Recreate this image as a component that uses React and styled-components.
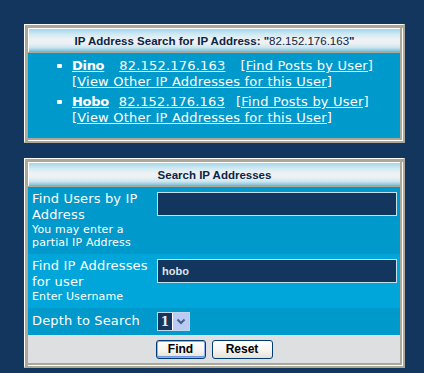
import styled, { createGlobalStyle } from "styled-components";

const Global = createGlobalStyle`
body {
  margin: 0;
  background: #12365e;
  font-family: "DejaVu Sans", Verdana, sans-serif;
}
`;

const Page = styled.div`
padding: 24px 0 20px 24px;
display: flex;
flex-direction: column;
gap: 15px;
`;

const Box = styled.div`
width: 381px;
box-sizing: border-box;
background: #aca899;
border-top: 1px solid #fff;
border-left: 1px solid #fff;
border-right: 2px solid #aca899;
border-bottom: 2px solid #aca899;
padding: 3px 0 0 3px;
`;

const Inner = styled.div`
border-right: 1px solid #fff;
border-bottom: 1px solid #fff;
padding: 0 2px 2px 0;
`;

const Header = styled.div`
height: 24px;
box-sizing: border-box;
border-top: 1px solid #fff;
border-left: 1px solid #fff;
margin-bottom: 1px;
background: linear-gradient(to bottom, #9fd6ea 0%, #cfe9f2 22%, #eef2f4 45%, #eef1f3 62%, #cde6ef 80%, #8fcbe0 93%, #6aaecb 100%);
display: flex;
align-items: center;
justify-content: center;
font: bold 11.5px "Liberation Sans", Arial, sans-serif;
color: #0c2444;
`;

const Plain = styled.span`
font-weight: normal;
`;

const ListBody = styled.ul`
margin: 0;
padding: 5px 0 12px 0;
list-style: none;
background: #0099cc;
color: #fff;
font-size: 13px;
line-height: 16px;
letter-spacing: 0.2px;
`;

const Item = styled.li`
position: relative;
padding-left: 44px;
margin-bottom: 4px;
&:last-child { margin-bottom: 0; }
&::before {
  content: "";
  position: absolute;
  left: 29px;
  top: 6px;
  width: 5px;
  height: 4px;
  border-radius: 1px;
  background: #fff;
}
`;

const Line = styled.div`
display: flex;
white-space: nowrap;
`;

const Link = styled.a`
color: #fff;
text-decoration: underline;
font-weight: ${p => (p.$bold ? "bold" : "normal")};
letter-spacing: ${p => (p.$bold ? "-0.3px" : "inherit")};
margin-left: ${p => p.$gap || 0}px;
`;

const Row = styled.div`
display: grid;
grid-template-columns: 125px 1fr;
align-items: ${p => (p.$center ? "center" : "start")};
min-height: ${p => p.$h}px;
background: ${p => (p.$alt ? "#00a6d9" : "#0099cc")};
color: #fff;
`;

const LabelCell = styled.div`
padding: 4px 4px 5px 4px;
font-size: 13px;
line-height: 16px;
letter-spacing: 0.15px;
`;

const Hint = styled.div`
font-size: 11px;
line-height: 13px;
`;

const InputCell = styled.div`
padding: ${p => (p.$flush ? "0 3px 0 4px" : "5px 3px 0 4px")};
`;

const Field = styled.div`
height: 24px;
box-sizing: border-box;
border: 1px solid #c6e0ec;
background: #12365e;
color: #dfe3ea;
font: bold 11px "Liberation Sans", Arial, sans-serif;
display: flex;
align-items: center;
padding-left: 4px;
`;

const Select = styled.div`
width: 33px;
height: 19px;
box-sizing: border-box;
border: 1px solid #c6d6ea;
display: flex;
background: #fff;
`;

const SelectValue = styled.div`
width: 14px;
background: #12365e;
color: #e8ecf2;
font: bold 12px "DejaVu Serif", "Liberation Serif", serif;
display: flex;
align-items: center;
justify-content: center;
`;

const SelectArrow = styled.div`
flex: 1;
margin-left: 1px;
background: #b9cbf4;
display: flex;
align-items: center;
justify-content: center;
`;

const Footer = styled.div`
height: 28px;
background: #dedfe1;
display: flex;
align-items: center;
justify-content: center;
gap: 6px;
`;

const Button = styled.button`
width: ${p => p.$w}px;
height: 19px;
padding: 0;
border: 1px solid #003c74;
border-radius: 3px;
background: linear-gradient(to bottom, #ffffff 0%, #f6f5f0 55%, #e4e1d6 100%);
box-shadow: ${p => (p.$focus ? "inset 0 0 0 1px #8fb0ec, inset 0 -1px 0 1px #6d93e2" : "none")};
font: bold 12px "Liberation Sans", Arial, sans-serif;
color: #000;
`;

const users = [
  { name: "Dino", ip: "82.152.176.163", g1: 15, g2: 15 },
  { name: "Hobo", ip: "82.152.176.163", g1: 10, g2: 11 },
];

export default function App() {
  return (
    <>
      <Global />
      <Page>
        <Box>
          <Inner>
            <Header>
              IP Address Search for IP Address: "<Plain>82.152.176.163</Plain>"
            </Header>
            <ListBody>
              {users.map(u => (
                <Item key={u.name}>
                  <Line>
                    <Link $bold>{u.name}</Link>
                    <Link $gap={u.g1}>{u.ip}</Link>
                    <Link $gap={u.g2}>[Find Posts by User]</Link>
                  </Line>
                  <Line>
                    <Link>[View Other IP Addresses for this User]</Link>
                  </Line>
                </Item>
              ))}
            </ListBody>
          </Inner>
        </Box>

        <Box>
          <Inner>
            <Header>Search IP Addresses</Header>
            <Row>
              <LabelCell>
                Find Users by IP Address
                <Hint>You may enter a partial IP Address</Hint>
              </LabelCell>
              <InputCell>
                <Field />
              </InputCell>
            </Row>
            <Row $alt>
              <LabelCell>
                Find IP Addresses for user
                <Hint>Enter Username</Hint>
              </LabelCell>
              <InputCell>
                <Field>hobo</Field>
              </InputCell>
            </Row>
            <Row $center $h={27}>
              <LabelCell>Depth to Search</LabelCell>
              <InputCell $flush>
                <Select>
                  <SelectValue>1</SelectValue>
                  <SelectArrow>
                    <svg width="10" height="7" viewBox="0 0 10 7">
                      <path d="M1.5 1.5 L5 5 L8.5 1.5" fill="none" stroke="#4a5f86" strokeWidth="2" />
                    </svg>
                  </SelectArrow>
                </Select>
              </InputCell>
            </Row>
            <Footer>
              <Button $w={50} $focus>Find</Button>
              <Button $w={61}>Reset</Button>
            </Footer>
          </Inner>
        </Box>
      </Page>
    </>
  );
}
